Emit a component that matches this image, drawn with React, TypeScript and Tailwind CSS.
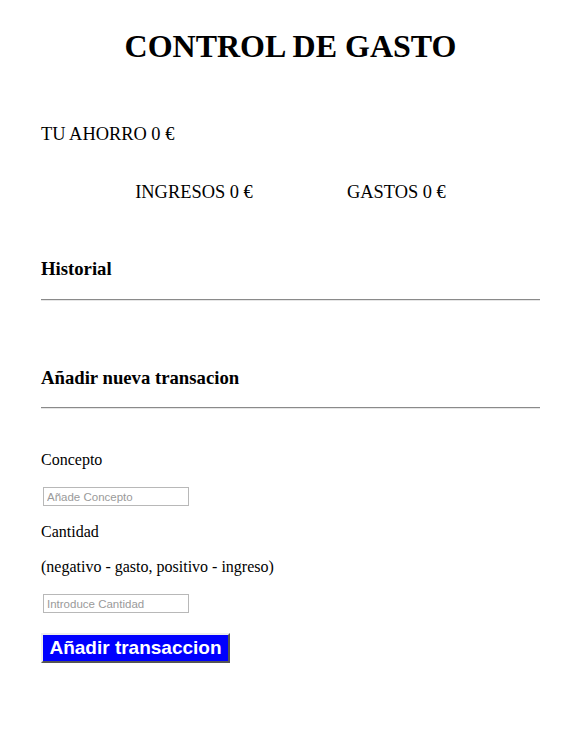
import React from "react";

export default function App() {
  const serif = { fontFamily: '"Liberation Serif", "Times New Roman", serif' };
  return (
    <div className="min-h-[752px] w-[582px] bg-white text-black" style={serif}>
      <div className="pl-[41px] pr-[42px] flex flex-col">
        <h1 className="mt-[28px] text-center text-[32px] font-bold leading-[37px]">CONTROL DE GASTO</h1>
        <div className="mt-[59px] text-[18.4px] leading-[21px]">TU AHORRO 0 €</div>
        <div className="mt-[37px] flex justify-evenly text-[18.4px] leading-[21px]">
          <div>INGRESOS 0 €</div>
          <div>GASTOS 0 €</div>
        </div>
        <h3 className="mt-[55px] text-[18.72px] font-bold leading-[21px]">Historial</h3>
        <div className="mt-[20px] h-[2px] border-t border-b border-t-[#8a8a8a] border-b-[#e6e6e6]" />
        <h3 className="mt-[66px] text-[18.72px] font-bold leading-[21px]">Añadir nueva transacion</h3>
        <div className="mt-[19px] h-[2px] border-t border-b border-t-[#8a8a8a] border-b-[#e6e6e6]" />
        <label className="mt-[42px] text-[16px] leading-[18px]">Concepto</label>
        <input
          className="mt-[18px] ml-[2px] h-[19px] w-[146px] border border-[#b8b8b8] px-[3px] text-[11.5px] outline-none placeholder:text-[#9a9a9a]"
          style={{ fontFamily: '"Liberation Sans", Arial, sans-serif' }}
          placeholder="Añade Concepto"
        />
        <label className="mt-[17px] text-[16px] leading-[18px]">Cantidad</label>
        <div className="mt-[17px] text-[16px] leading-[18px]">(negativo - gasto, positivo - ingreso)</div>
        <input
          className="mt-[18px] ml-[2px] h-[19px] w-[146px] border border-[#b8b8b8] px-[3px] text-[11.5px] outline-none placeholder:text-[#9a9a9a]"
          style={{ fontFamily: '"Liberation Sans", Arial, sans-serif' }}
          placeholder="Introduce Cantidad"
        />
        <div className="mt-[20px] flex">
          <button
            className="h-[30px] w-[189px] border-2 border-t-[#eeeeee] border-l-[#eeeeee] border-r-[#555555] border-b-[#555555] bg-[#0000ff] text-[19px] font-bold leading-[26px] text-white"
            style={{ fontFamily: '"Liberation Sans", Arial, sans-serif' }}
          >
            Añadir transaccion
          </button>
        </div>
      </div>
    </div>
  );
}
